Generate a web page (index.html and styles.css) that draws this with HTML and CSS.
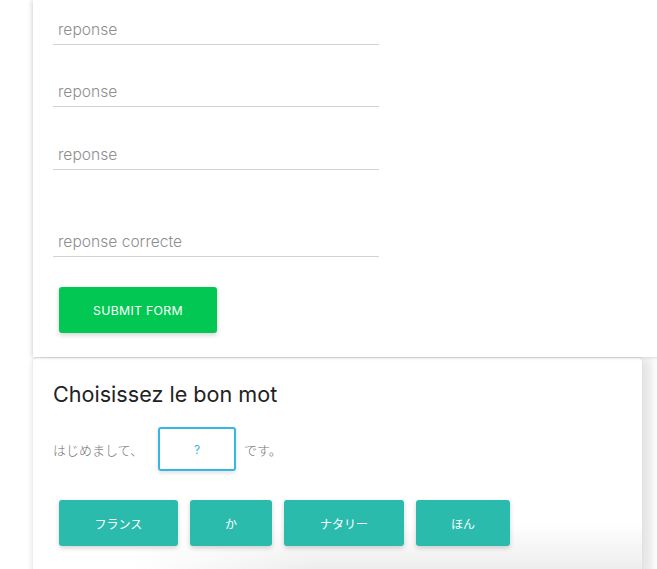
FILE: index.html
```html
<!DOCTYPE html>
<html lang="fr">
<head>
<meta charset="utf-8">
<link rel="stylesheet" href="styles.css">
</head>
<body>
<div class="page">
  <div class="card form-card">
    <form class="form">
      <input class="field" type="text" placeholder="reponse">
      <input class="field field-mid" type="text" placeholder="reponse">
      <input class="field" type="text" placeholder="reponse">
      <input class="field field-correct" type="text" placeholder="reponse correcte">
      <button class="btn submit" type="button">SUBMIT FORM</button>
    </form>
  </div>
  <div class="card quiz-card">
    <h2 class="title">Choisissez le bon mot</h2>
    <div class="sentence">
      <span class="jp">はじめまして、</span>
      <span class="blank">?</span>
      <span class="jp">です。</span>
    </div>
    <div class="choices">
      <button class="btn choice w1" type="button">フランス</button>
      <button class="btn choice w2" type="button">か</button>
      <button class="btn choice w3" type="button">ナタリー</button>
      <button class="btn choice w4" type="button">ほん</button>
    </div>
  </div>
</div>
</body>
</html>
```
FILE: styles.css
```css
html, body {
  margin: 0;
  padding: 0;
  background: #fff;
  overflow: hidden;
  height: 569px;
}
.page {
  padding-left: 33px;
  width: 640px;
}
.card {
  background: #fff;
  position: relative;
}
.form-card {
  width: 640px;
  height: 357px;
  box-shadow: -2px 0 4px rgba(0,0,0,0.10), 0 1px 3px rgba(0,0,0,0.08);
  z-index: 1;
}
.form {
  display: flex;
  flex-direction: column;
  align-items: flex-start;
  padding: 15px 20px 0;
}
.field {
  width: 326px;
  height: 30px;
  box-sizing: border-box;
  border: none;
  border-bottom: 1px solid #d2d2d6;
  padding: 0 5px;
  font-family: Inter, Roboto, "Liberation Sans", sans-serif;
  font-size: 15.6px;
  color: #333;
  outline: none;
  background: transparent;
  margin-bottom: 32px;
}
.field-mid {
  margin-bottom: 33px;
}
.field::placeholder {
  color: #8e8e8e;
  font-weight: 300;
}
.field-correct {
  margin-top: 25px;
  margin-bottom: 0;
}
.btn {
  border: none;
  color: #fff;
  border-radius: 3px;
  box-shadow: 0 2px 5px rgba(0,0,0,0.18);
  cursor: pointer;
}
.submit {
  margin: 30px 0 0 6px;
  width: 158px;
  height: 46px;
  background: #02c853;
  font-family: Inter, Roboto, "Liberation Sans", sans-serif;
  font-size: 12.3px;
  letter-spacing: 0.3px;
}
.quiz-card {
  margin-top: 1px;
  width: 609px;
  height: 240px;
  border-radius: 4px 4px 0 0;
  box-shadow: -2px 0 4px rgba(0,0,0,0.08), 10px 0 10px rgba(0,0,0,0.10), 0 -1px 2px rgba(0,0,0,0.06);
  padding: 20px 20px 0;
  box-sizing: border-box;
}
.quiz-card::after {
  content: "";
  position: absolute;
  left: 100px;
  right: 0;
  top: 165px;
  height: 50px;
  background: linear-gradient(to bottom, rgba(236,236,236,0), rgba(236,236,236,1));
  -webkit-mask-image: linear-gradient(to right, transparent 0, #000 180px);
  mask-image: linear-gradient(to right, transparent 0, #000 180px);
  pointer-events: none;
  z-index: 0;
}
.title {
  margin: 0;
  font-family: Inter, "Liberation Sans", sans-serif;
  font-weight: 400;
  font-size: 21.6px;
  color: #222;
  line-height: 32px;
}
.sentence {
  display: flex;
  align-items: center;
  gap: 14px;
  margin-top: 17px;
}
.jp {
  font-family: "Noto Sans CJK JP", sans-serif;
  font-size: 13px;
  font-weight: 300;
  color: #777;
}
.blank {
  width: 78px;
  height: 44px;
  box-sizing: border-box;
  border: 2px solid #38b6e3;
  border-radius: 3px;
  display: flex;
  align-items: center;
  justify-content: center;
  font-family: Inter, Roboto, "Liberation Sans", sans-serif;
  font-size: 12px;
  color: #38b6e3;
  box-shadow: 0 2px 4px rgba(0,0,0,0.12);
  margin-left: 1px;
  margin-right: -6px;
}
.choices {
  display: flex;
  gap: 12px;
  margin-top: 29px;
  padding-left: 6px;
  position: relative;
  z-index: 1;
}
.choice {
  height: 46px;
  background: #2bbbad;
  font-family: "Noto Sans CJK JP", sans-serif;
  font-size: 12px;
}
.w1 { width: 119px; }
.w2 { width: 82px; }
.w3 { width: 120px; }
.w4 { width: 94px; }
```
